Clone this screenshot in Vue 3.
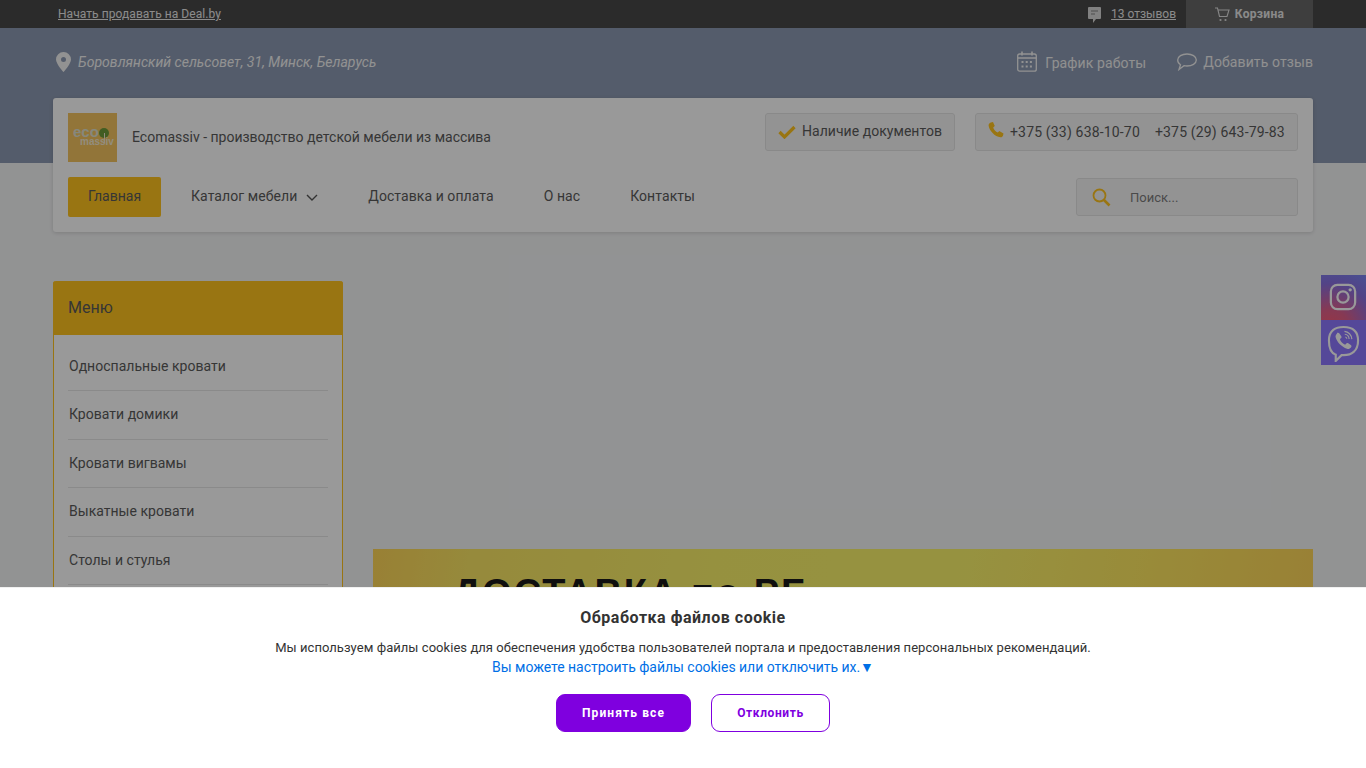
<script setup>
const nav = [
  { label: 'Каталог мебели', chevron: true },
  { label: 'Доставка и оплата' },
  { label: 'О нас' },
  { label: 'Контакты' }
]
const menu = ['Односпальные кровати', 'Кровати домики', 'Кровати вигвамы', 'Выкатные кровати', 'Столы и стулья', 'Шкафы']
</script>

<template>
  <div class="page">
    <div class="topbar">
      <div class="wrap topbar-in">
        <a class="sell">Начать продавать на Deal.by</a>
        <div class="topbar-right">
          <svg class="ic-note" width="13" height="16" viewBox="0 0 13 16"><path fill="#d8d8d8" d="M1 0h11a1 1 0 0 1 1 1v10a1 1 0 0 1-1 1H8l-3 4v-4H1a1 1 0 0 1-1-1V1a1 1 0 0 1 1-1z"/><path stroke="#808080" stroke-width="1" d="M3 4h7M3 7h4"/></svg>
          <a class="reviews">13 отзывов</a>
          <div class="cart">
            <svg width="15" height="15" viewBox="0 0 15 15" fill="none" stroke="#e0e0e0" stroke-width="1.100"><path d="M0 1h2.500l2 8.500h7.500l2-6.500H3.200"/><circle cx="5.500" cy="13" r="1.100" fill="#e0e0e0" stroke="none"/><circle cx="10.500" cy="13" r="1.100" fill="#e0e0e0" stroke="none"/></svg>
            <b>Корзина</b>
          </div>
        </div>
      </div>
    </div>

    <div class="hero">
      <div class="wrap hero-row">
        <div class="addr">
          <svg width="15" height="20" viewBox="0 0 15 20"><path fill="#f4f4f4" fill-rule="evenodd" d="M7.500 0A7.500 7.500 0 0 0 0 7.500C0 12 7.500 20 7.500 20S15 12 15 7.500A7.500 7.500 0 0 0 7.500 0zm0 5a2.500 2.500 0 1 1 0 5 2.500 2.500 0 0 1 0-5z"/></svg>
          <i>Боровлянский сельсовет, 31, Минск, Беларусь</i>
        </div>
        <div class="hero-links">
          <div class="hero-link sched">
            <svg width="20" height="21" viewBox="0 0 20 21" fill="none" stroke="#f4f4f4" stroke-width="1.300"><rect x=".7" y="3" width="18.600" height="17.200" rx="2"/><path d="M5 .5v4M15 .5v4M.7 7h18.600" stroke-width="1.600"/><path stroke-width="2" stroke-dasharray="2 2.200" d="M4.500 11h11M4.500 15.500h11"/></svg>
            <span>График работы</span>
          </div>
          <div class="hero-link">
            <svg width="20" height="18" viewBox="0 0 20 18" fill="none" stroke="#f4f4f4" stroke-width="1.300"><path d="M10 1c5 0 9.300 2.400 9.300 6s-4.300 6-9.300 6c-1 0-2-.1-3-.3L2 16.500l1.500-4.700C1.800 10.800.7 9 .7 7 .7 3.400 5 1 10 1z"/></svg>
            <span>Добавить отзыв</span>
          </div>
        </div>
      </div>
    </div>

    <div class="wrap head-wrap">
      <div class="card">
        <div class="card-top">
          <div class="logo">
            <span class="eco">eco</span><span class="mass">massiv</span><span class="tree"></span>
          </div>
          <div class="title">Ecomassiv - производство детской мебели из массива</div>
          <div class="badge docs">
            <svg width="18" height="14" viewBox="0 0 18 14" fill="none" stroke="#ffc31f" stroke-width="3.200"><path d="M1.500 7l5 5L16.500 2"/></svg>
            <span>Наличие документов</span>
          </div>
          <div class="badge phones">
            <svg width="16" height="16" viewBox="0 0 16 16"><path fill="#ffc31f" d="M2.800.4 5 .1l1.800 4-1.600 1.500c.5 1.900 2.500 4.200 4.600 5l1.500-1.500 4.200 2.300-.5 2.400c-.4 1-1.400 1.700-2.600 1.500C6.800 14.600 1.200 8.700.6 3.500.500 2 1.400.8 2.800.4z"/></svg>
            <span class="ph">+375 (33) 638-10-70</span>
            <span class="ph">+375 (29) 643-79-83</span>
          </div>
        </div>
        <div class="card-nav">
          <a class="nav-main">Главная</a>
          <a v-for="n in nav" :key="n.label" class="nav-item">
            <span>{{ n.label }}</span>
            <svg v-if="n.chevron" class="chev" width="12" height="7" viewBox="0 0 12 7" fill="none" stroke="#555" stroke-width="1.400"><path d="M1 1l5 5 5-5"/></svg>
          </a>
          <div class="search">
            <svg width="19" height="19" viewBox="0 0 19 19" fill="none" stroke="#ffc31f"><circle cx="7.500" cy="7.500" r="6" stroke-width="1.800"/><path d="M12 12l5.500 5.500" stroke-width="2.600"/></svg>
            <span>Поиск...</span>
          </div>
        </div>
      </div>
    </div>

    <div class="wrap body-row">
      <aside class="side">
        <div class="side-head">Меню</div>
        <ul class="side-list">
          <li v-for="m in menu" :key="m">{{ m }}</li>
        </ul>
      </aside>
      <main class="content">
        <div class="banner"><span>ДОСТАВКА по РБ</span></div>
      </main>
    </div>

    <div class="socials">
      <div class="soc insta">
        <svg width="28" height="28" viewBox="0 0 30 30" fill="none" stroke="#fff" stroke-width="2.400"><rect x="2" y="2" width="26" height="26" rx="7"/><circle cx="15" cy="15" r="6"/><circle cx="22.700" cy="7.300" r="1.800" fill="#fff" stroke="none"/></svg>
      </div>
      <div class="soc viber">
        <svg width="33" height="37" viewBox="0 0 34 38" fill="none" stroke="#fff"><path stroke-width="2.200" d="M17 2c8 0 15 2.500 15 14 0 11-7 15-15 15h-2l-6 6v-6.500C4 29 2 25 2 16 2 5 9 2 17 2z"/><path fill="#fff" stroke="none" d="M10 8.500c1-.8 2.200-.6 2.800.3l1.900 2.700c.5.800.3 1.600-.5 2.200l-.9.800c.8 2.400 2.900 4.700 5.400 5.700l.9-1c.6-.7 1.500-.9 2.300-.4l2.600 1.800c.9.600 1 1.700.2 2.600-1.100 1.300-2.500 1.900-4.100 1.300-5.700-2.200-10-6.500-11.700-11.900-.4-1.500.4-2.900 1.600-4z"/><path stroke-width="1.200" d="M18 6.500c4 .3 7.300 3.500 7.600 8M18.300 9.500c2.500.2 4.300 2 4.500 4.800M18.800 12.300c1 .1 1.500.7 1.600 1.800"/></svg>
      </div>
    </div>

    <div class="overlay"></div>

    <div class="cookie">
      <div class="cookie-title">Обработка файлов cookie</div>
      <p class="cookie-text">Мы используем файлы cookies для обеспечения удобства пользователей портала и предоставления персональных рекомендаций.</p>
      <a class="cookie-link">Вы можете настроить файлы cookies или отключить их.▼</a>
      <div class="cookie-btns">
        <button class="btn accept">Принять все</button>
        <button class="btn reject">Отклонить</button>
      </div>
    </div>
  </div>
</template>

<style>
html, body { margin: 0; height: 100%; overflow: hidden; }
</style>

<style scoped>
.page { height: 768px; overflow: hidden; position: relative; background: #f4f5f6; font-family: Roboto, "Liberation Sans", sans-serif; color: #5a5a5a; font-size: 14px; }
.wrap { width: 1260px; margin: 0 auto; }
a { color: inherit; }
.topbar { height: 28px; background: #484848; color: #e8e8e8; font-size: 12px; }
.topbar-in { display: flex; justify-content: space-between; align-items: center; height: 28px; }
.sell { margin-left: 5px; text-decoration: underline; letter-spacing: .06px; }
.topbar-right { display: flex; align-items: center; height: 28px; }
.ic-note { margin-right: 10px; margin-top: 2px; }
.reviews { text-decoration: underline; margin-right: 10px; }
.cart { width: 127px; height: 28px; background: #686868; display: flex; align-items: center; justify-content: center; gap: 5px; color: #e6e6e6; }
.cart b { letter-spacing: .3px; }
.hero { height: 135px; background: #8d9ab2; box-sizing: border-box; padding-top: 24px; }
.hero-row { display: flex; justify-content: space-between; align-items: flex-start; height: 22px; }
.addr { display: flex; align-items: center; gap: 7px; color: #f4f4f4; margin-left: 3px; font-size: 14px; line-height: 20px; }
.addr i { letter-spacing: .03px; }
.hero-links { display: flex; gap: 31px; color: #f0f0f0; font-size: 14px; }
.hero-link { display: flex; align-items: center; gap: 6px; line-height: 20px; letter-spacing: .1px; height: 20px; }
.sched { gap: 8px; }
.sched svg { margin-top: -1px; }
.sched span { margin-top: 1px; }
.head-wrap { margin-top: -65px; position: relative; }
.card { background: #fff; border-radius: 3px; box-shadow: 0 1px 4px rgba(0,0,0,.15); padding: 15px; height: 134px; box-sizing: border-box; }
.card-top { display: flex; align-items: flex-start; height: 49px; }
.logo { width: 49px; height: 49px; background: #f4c45f; position: relative; flex: none; overflow: hidden; }
.eco { position: absolute; left: 5px; top: 13px; font: 700 15px/12px "Liberation Sans", sans-serif; color: #dfe2d0; }
.mass { position: absolute; left: 12px; top: 25px; font: 700 10px/8px "Liberation Sans", sans-serif; color: #f3ead0; }
.tree { position: absolute; left: 31px; top: 15px; width: 10px; height: 10px; border-radius: 50%; background: #6e9b3a; }
.tree::after { content: ""; position: absolute; left: 4.500px; top: 5px; width: 1px; height: 10px; background: #f3ead0; }
.title { margin-left: 15px; flex: 1; font-size: 14px; line-height: 20px; margin-top: 14px; }
.badge { height: 38px; box-sizing: border-box; background: #f6f6f6; border: 1px solid #e4e4e4; border-radius: 3px; display: flex; align-items: center; font-size: 14px; }
.docs { width: 190px; padding-left: 12px; gap: 6px; margin-right: 20px; letter-spacing: .04px; }
.docs span { margin-top: -2px; }
.phones { width: 323px; padding-left: 12px; letter-spacing: .17px; }
.phones svg { margin-right: 6px; margin-top: -4px; }
.ph + .ph { margin-left: 15px; }
.card-nav { display: flex; align-items: center; margin-top: 15px; height: 40px; }
.nav-main { width: 93px; height: 40px; box-sizing: border-box; padding-bottom: 2px; background: #ffc31f; border-radius: 2px; display: flex; align-items: center; justify-content: center; }
.nav-item { display: flex; align-items: center; height: 40px; padding: 0 25px; margin-top: -2px; margin-left: 5px; letter-spacing: .07px; }
.nav-item + .nav-item { margin-left: 0; }
.chev { margin-left: 9px; margin-top: 2px; }
.search { margin-left: auto; width: 222px; height: 38px; box-sizing: border-box; background: #f6f6f6; border: 1px solid #e4e4e4; border-radius: 3px; display: flex; align-items: center; padding-left: 15px; color: #7c7c7c; }
.search span { margin-left: 19px; font-size: 13px; }
.body-row { display: flex; gap: 30px; margin-top: 49px; }
.side { width: 290px; flex: none; box-sizing: border-box; border: 1px solid #ffc31f; border-top: none; border-radius: 3px; background: #fff; height: 400px; }
.side-head { height: 54px; background: #ffc31f; margin: 0 -1px; border-radius: 3px 3px 0 0; font-size: 16px; line-height: 53px; padding-left: 15px; }
.side-list { list-style: none; margin: 7.600px 0 0; padding: 0 14px; }
.side-list li { height: 48.500px; line-height: 47px; border-bottom: 1px solid #e6e6e6; box-sizing: border-box; letter-spacing: .02px; padding-left: 1px; }
.content { flex: 1; padding-top: 268px; }
.banner { height: 200px; background: linear-gradient(100deg, #ffd658 0%, #fbe664 10%, #fbf26a 35%, #fbf46c 60%, #ffe860 80%, #ffd458 100%); overflow: hidden; padding: 24px 0 0 80px; box-sizing: border-box; }
.banner span { font: 700 38px/40px "Liberation Sans", sans-serif; color: #1a1a1a; letter-spacing: 2px; white-space: nowrap; }
.socials { position: absolute; right: 0; top: 275px; width: 45px; }
.soc { height: 45px; display: flex; align-items: center; justify-content: center; }
.insta { background: radial-gradient(circle at 20% 120%, #ff5a70 0%, #e0608c 30%, #8a70e0 70%, #7a86f4 100%); }
.insta svg { margin-top: -2px; margin-left: -1px; }
.viber { background: #8e78ff; }
.viber svg { margin-left: -1px; margin-top: 1px; }
.overlay { position: absolute; inset: 0; background: rgba(0,0,0,.4); }
.cookie { position: absolute; left: 0; right: 0; bottom: 0; height: 181px; background: #fff; text-align: center; box-sizing: border-box; padding-top: 21px; border-top: 1px solid #f0f0f0; }
.cookie-title { font-size: 16px; font-weight: 700; line-height: 18px; color: #333; letter-spacing: .52px; }
.cookie-text { margin: 12px 0 0; font-size: 13px; line-height: 18px; color: #333; letter-spacing: .05px; }
.cookie-link { display: block; margin-top: 0; font-size: 14px; line-height: 20px; color: #006fe6; letter-spacing: -.03px; }
.cookie-btns { display: flex; justify-content: center; gap: 20px; margin-top: 17px; margin-left: 20px; }
.btn { height: 38px; box-sizing: border-box; border-radius: 9px; font: 700 12px Roboto, sans-serif; letter-spacing: .6px; border: 1px solid #7f00df; padding: 0; }
.accept { width: 135px; background: #7f00df; color: #fff; letter-spacing: 1.100px; }
.reject { width: 119px; background: #fff; color: #7f00df; }
</style>
